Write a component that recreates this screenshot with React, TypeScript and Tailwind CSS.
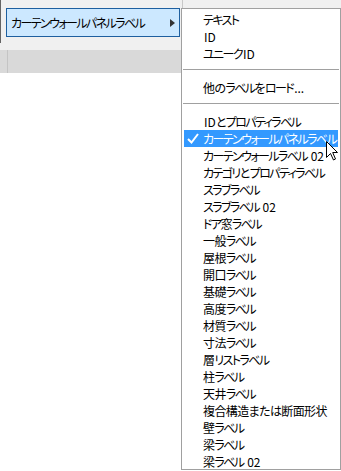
import React from "react"

type Item = { label: string; checked?: boolean } | "sep"

const items: Item[] = [
  { label: "テキスト" },
  { label: "ID" },
  { label: "ユニークID" },
  "sep",
  { label: "他のラベルをロード..." },
  "sep",
  { label: "IDとプロパティラベル" },
  { label: "カーテンウォールパネルラベル", checked: true },
  { label: "カーテンウォールラベル 02" },
  { label: "カテゴリとプロパティラベル" },
  { label: "スラブラベル" },
  { label: "スラブラベル 02" },
  { label: "ドア窓ラベル" },
  { label: "一般ラベル" },
  { label: "屋根ラベル" },
  { label: "開口ラベル" },
  { label: "基礎ラベル" },
  { label: "高度ラベル" },
  { label: "材質ラベル" },
  { label: "寸法ラベル" },
  { label: "層リストラベル" },
  { label: "柱ラベル" },
  { label: "天井ラベル" },
  { label: "複合構造または断面形状" },
  { label: "壁ラベル" },
  { label: "梁ラベル" },
  { label: "梁ラベル 02" },
]

// kana are narrow in the UI font, kanji are close to full width
function Jp({ text }: { text: string }) {
  const parts = text.split(/([\u30A0-\u30FF]+|[\u3040-\u309F\u4E00-\u9FFF]+)/).filter(Boolean)
  return (
    <>
      {parts.map((p, i) => {
        if (/[\u30A0-\u30FF]/.test(p))
          return <span key={i} className="tracking-[-1.6px]">{p}</span>
        if (/[\u3040-\u309F\u4E00-\u9FFF]/.test(p))
          return <span key={i} className="tracking-[-0.6px]">{p}</span>
        return <span key={i} className="whitespace-pre pl-[1px]">{p}</span>
      })}
    </>
  )
}

export default function App() {
  return (
    <div className="relative w-[341px] h-[471px] overflow-hidden bg-white text-[12px] text-black font-['Noto_Sans_CJK_JP',sans-serif] [font-feature-settings:'palt']">
      {/* background panel */}
      <div className="h-[50px] bg-[#f0f0f0] flex">
        <div className="w-px h-[43px] bg-[#646464]" />
        <div className="ml-[5px] mt-[8px] w-[174px] h-[29px] bg-[#cce8ff] border border-[#1e5f9f] flex items-center pl-[4px] pr-[4px]">
          <span className="flex-1 leading-none whitespace-nowrap">
            <Jp text="カーテンウォールパネルラベル" />
          </span>
          <svg width="5" height="8" viewBox="0 0 5 8">
            <path d="M0 0 L5 4 L0 8 Z" fill="#333" />
          </svg>
        </div>
        <div className="ml-[2px] w-px h-[8px] bg-[#c8c8c8]" />
      </div>
      <div className="h-[23px] bg-[#d9d9d9] flex">
        <div className="ml-[7px] w-px h-full bg-[#c4c4c4]" />
      </div>

      {/* context menu */}
      <div className="absolute left-[181px] top-[8px] w-[160px] h-[462px] bg-white border border-[#a0a0a0] pt-[2px]">
        {items.map((it, i) =>
          it === "sep" ? (
            <div key={i} className="h-[17px] pt-[7px] px-[1px]">
              <div className="h-px bg-[#a0a0a0]" />
            </div>
          ) : (
            <div
              key={i}
              className={
                "relative h-[17px] mx-[2px] pl-[19px] leading-[17px] whitespace-nowrap " +
                (it.checked ? "bg-[#3399ff] text-white" : "")
              }
            >
              {it.checked && (
                <svg className="absolute left-[3px] top-[3px]" width="12" height="11" viewBox="0 0 12 11">
                  <path d="M1 6 L4.5 9.5 L11 1" fill="none" stroke="white" strokeWidth="2" />
                </svg>
              )}
              <Jp text={it.label} />
            </div>
          )
        )}
      </div>

      {/* mouse cursor */}
      <svg className="absolute left-[326px] top-[141px]" width="13" height="20" viewBox="0 0 13 20">
        <path
          d="M0.5 0.5 L0.5 16.5 L4.5 12.5 L7.5 19 L9.5 18 L6.7 11.5 L11.5 11.5 Z"
          fill="white"
          stroke="black"
          strokeWidth="1"
        />
      </svg>
    </div>
  )
}
